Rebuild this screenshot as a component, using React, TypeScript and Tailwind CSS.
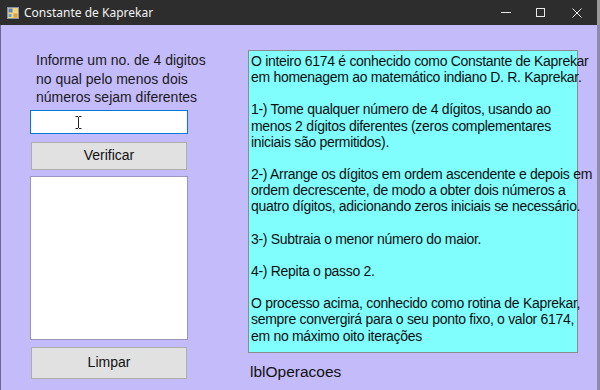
import React from 'react';

const font = { fontFamily: '"Liberation Sans", Arial, sans-serif' };

const AppIcon = () => (
  <svg width="12" height="12" viewBox="0 0 12 12">
    <rect x="0.5" y="0.5" width="11" height="11" fill="#f4d47a" stroke="#8a8fa8" />
    <rect x="1.5" y="1.5" width="4" height="4" fill="#5a86c8" />
    <rect x="6.5" y="6.5" width="4" height="4" fill="#d9a04a" />
    <rect x="1.5" y="7" width="3" height="3" fill="#6aa0d8" />
  </svg>
);

const IBeam = () => (
  <svg width="7" height="13" viewBox="0 0 7 13" className="absolute left-[44px] top-[5px]">
    <path d="M0.5 0.5h2.5M4 0.5h2.5M3.5 1v11M0.5 12.5h2.5M4 12.5h2.5" stroke="#222" strokeWidth="1" fill="none" />
  </svg>
);

const App: React.FC = () => {
  const paragraphs = [
    ['O inteiro 6174 é conhecido como Constante de Kaprekar', 'em homenagem ao matemático indiano D. R. Kaprekar.'],
    ['1-) Tome qualquer número de 4 dígitos, usando ao', 'menos 2 dígitos diferentes (zeros complementares', 'iniciais são permitidos).'],
    ['2-) Arrange os dígitos em ordem ascendente e depois em', 'ordem decrescente, de modo a obter dois números a', 'quatro dígitos, adicionando zeros iniciais se necessário.'],
    ['3-) Subtraia o menor número do maior.'],
    ['4-) Repita o passo 2.'],
    ['O processo acima, conhecido como rotina de Kaprekar,', 'sempre convergirá para o seu ponto fixo, o valor 6174,', 'em no máximo oito iterações'],
  ];

  return (
    <div className="w-[600px] h-[390px] flex flex-col bg-[#c4bbfb] overflow-hidden" style={font}>
      {/* barra de titulo */}
      <div className="h-[25px] bg-[#2e2d2d] flex items-center text-white shrink-0">
        <div className="pl-[7px] pr-[5px] flex items-center"><AppIcon /></div>
        <span className="text-[12px] text-[#f2f2f2]" style={{ fontFamily: '"Noto Sans", "DejaVu Sans", sans-serif' }}>Constante de Kaprekar</span>
        <div className="ml-auto flex items-center h-full">
          <div className="w-[34px] flex justify-center">
            <div className="w-[10px] h-px bg-[#e8e8e8]" />
          </div>
          <div className="w-[34px] flex justify-center">
            <div className="w-[9px] h-[9px] border border-[#e8e8e8]" />
          </div>
          <div className="w-[40px] flex justify-center">
            <svg width="10" height="10" viewBox="0 0 10 10">
              <path d="M0.5 0.5L9.5 9.5M9.5 0.5L0.5 9.5" stroke="#e8e8e8" strokeWidth="1" />
            </svg>
          </div>
          <div className="w-[3px] h-full bg-[#9a9a9a]" />
        </div>
      </div>

      {/* conteudo */}
      <div className="flex-1 flex border-l border-[#6c6790] border-r-[3px] border-r-[#8f8aa8]">
        {/* coluna esquerda */}
        <div className="w-[158px] ml-[29px] flex flex-col">
          <div className="mt-[26px] pl-[6px] text-[14px] leading-[18.5px] text-[#1a1a1a] whitespace-nowrap">
            <div>Informe um no. de 4 digitos</div>
            <div>no qual pelo menos dois</div>
            <div>números sejam diferentes</div>
          </div>
          <div className="relative mt-[3px] h-[24px] bg-white border border-[#0078d7]">
            <IBeam />
          </div>
          <button className="mt-[8px] mx-[1px] h-[28px] bg-[#e1e1e1] border border-[#adadad] text-[14px] text-[#111]">
            Verificar
          </button>
          <div className="mt-[6px] h-[164px] bg-white border border-[#9b96bd]" />
          <button className="mt-[7px] mx-[1px] h-[32px] bg-[#e1e1e1] border border-[#adadad] text-[14px] text-[#111]">
            Limpar
          </button>
        </div>

        {/* coluna direita */}
        <div className="ml-[60px] flex flex-col">
          <div className="mt-[25px] w-[330px] h-[303px] bg-[#80fdfd] border border-[#8c8c8c] pl-[2px] pt-[2px] text-[14px] leading-[16.15px] text-[#111] whitespace-nowrap tracking-[-0.3px]">
            {paragraphs.map((p, i) => (
              <div key={i} className={i > 0 ? 'mt-[16.15px]' : ''}>
                {p.map((l, j) => <div key={j}>{l}</div>)}
              </div>
            ))}
          </div>
          <div className="mt-[7px] pl-[2px] text-[15.5px] text-[#111]">lblOperacoes</div>
        </div>
      </div>
    </div>
  );
};

export default App;
